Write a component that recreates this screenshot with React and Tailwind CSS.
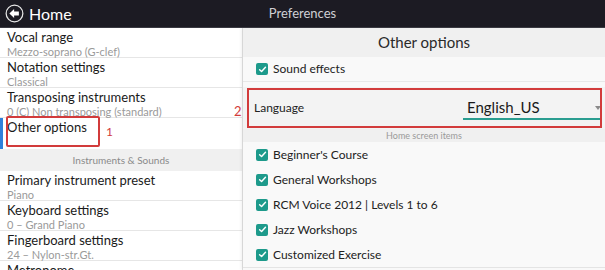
const leftRows = [
  { title: 'Vocal range', sub: 'Mezzo-soprano (G-clef)' },
  { title: 'Notation settings', sub: 'Classical' },
  { title: 'Transposing instruments', sub: '0 (C) Non transposing (standard)' },
];

const instrumentRows = [
  { title: 'Primary instrument preset', sub: 'Piano' },
  { title: 'Keyboard settings', sub: '0 – Grand Piano' },
  { title: 'Fingerboard settings', sub: '24 – Nylon-str.Gt.' },
  { title: 'Metronome', sub: '' },
];

const homeItems = [
  "Beginner's Course",
  'General Workshops',
  'RCM Voice 2012 | Levels 1 to 6',
  'Jazz Workshops',
  'Customized Exercise',
];

function Checkbox() {
  return (
    <span className="flex h-[12px] w-[12px] shrink-0 items-center justify-center rounded-[2px] bg-[#1d9a8b]">
      <svg width="9" height="9" viewBox="0 0 10 10" fill="none">
        <path d="M1.8 5.2 L4 7.3 L8.3 2.6" stroke="white" strokeWidth="1.6" strokeLinecap="round" strokeLinejoin="round" />
      </svg>
    </span>
  );
}

function SettingRow({ title, sub }) {
  return (
    <div className="h-[30px] shrink-0 border-b border-[#e6e6e6] px-[7px] pt-[2px]">
      <p className="text-[13px] leading-[15px] text-[#1a1a1a]">{title}</p>
      {sub && <p className="text-[11px] leading-[13px] text-[#9a9a9a]">{sub}</p>}
    </div>
  );
}

function BackIcon() {
  return (
    <svg width="19" height="19" viewBox="0 0 20 20">
      <circle cx="10" cy="10" r="8.8" fill="none" stroke="#e8e8e8" strokeWidth="1.3" />
      <path d="M4.6 10 L9.6 5.2 L9.6 8 L14.6 8 L14.6 12 L9.6 12 L9.6 14.8 Z" fill="white" />
    </svg>
  );
}

export default function App() {
  return (
    <div
      className="flex h-[270px] w-[605px] flex-col overflow-hidden bg-white"
      style={{ fontFamily: 'Lato, "Noto Sans", sans-serif' }}
    >
      <header className="relative flex h-[28px] shrink-0 items-center border-b border-[#3a3a42] bg-[#1c1b23] px-[5px]">
        <BackIcon />
        <span className="ml-[5px] text-[16px] leading-none text-white">Home</span>
        <span className="absolute left-1/2 -translate-x-1/2 text-[13px] text-[#cfcfd4]">Preferences</span>
      </header>

      <div className="flex min-h-0 flex-1">
        <aside className="flex w-[243px] shrink-0 flex-col border-r border-[#e2e2e2] bg-white">
          {leftRows.map((row) => (
            <SettingRow key={row.title} {...row} />
          ))}
          <div className="relative h-[31px] shrink-0 px-[7px] pt-[2px]">
            <span className="absolute left-0 top-0 h-full w-[3px] bg-[#2f80db]" />
            <p className="text-[13px] leading-[15px] text-[#1a1a1a]">Other options</p>
            <span className="absolute left-[6px] top-[-2px] h-[31px] w-[94px] rounded-[2px] border-2 border-[#d23b3b]" />
            <span className="absolute left-[106px] top-[5px] text-[12px] text-[#d23b3b]">1</span>
          </div>
          <div className="flex h-[22px] shrink-0 items-center justify-center bg-[#f0f0f0] text-[10px] text-[#8a8a8a]">
            Instruments &amp; Sounds
          </div>
          {instrumentRows.map((row) => (
            <SettingRow key={row.title} {...row} />
          ))}
        </aside>

        <section className="flex min-w-0 flex-1 flex-col bg-[#f9f9f9] shadow-[-2px_0_3px_rgba(0,0,0,0.06)]">
          <div className="flex h-[29px] shrink-0 items-center justify-center bg-[#f0f0f0] text-[15px] text-[#2a2a2a]">
            Other options
          </div>
          <div className="flex h-[25px] shrink-0 items-center gap-[5px] border-b border-[#e8e8e8] pl-[13px]">
            <Checkbox />
            <span className="text-[12px] text-[#222]">Sound effects</span>
          </div>
          <div className="relative mt-[5px] flex h-[42px] shrink-0 items-center bg-[#f3f3f3] pl-[11px]">
            <span className="text-[12px] text-[#222]">Language</span>
            <div className="relative ml-auto mr-[3px] flex h-[24px] w-[139px] items-center border-b-2 border-[#2a9d90] pl-[4px]">
              <span className="text-[15px] text-[#1a1a1a]">English_US</span>
              <span className="absolute right-[1px] top-[10px] h-0 w-0 border-x-[3px] border-t-[4px] border-x-transparent border-t-[#8a8a8a]" />
            </div>
            <span className="absolute left-[4px] top-[1px] h-[40px] w-[355px] border-2 border-[#d23b3b]" />
            <span className="absolute left-[-9px] top-[15px] text-[13px] text-[#d23b3b]">2</span>
          </div>
          <div className="flex h-[13px] shrink-0 items-center justify-center bg-[#f0f0f0] text-[9px] leading-none text-[#9a9a9a]">
            Home screen items
          </div>
          {homeItems.map((item) => (
            <div key={item} className="flex h-[25px] shrink-0 items-center gap-[5px] pl-[13px]">
              <Checkbox />
              <span className="text-[12px] text-[#222]">{item}</span>
            </div>
          ))}
          <div className="border-t border-[#e4e4e4]" />
        </section>
      </div>
    </div>
  );
}
